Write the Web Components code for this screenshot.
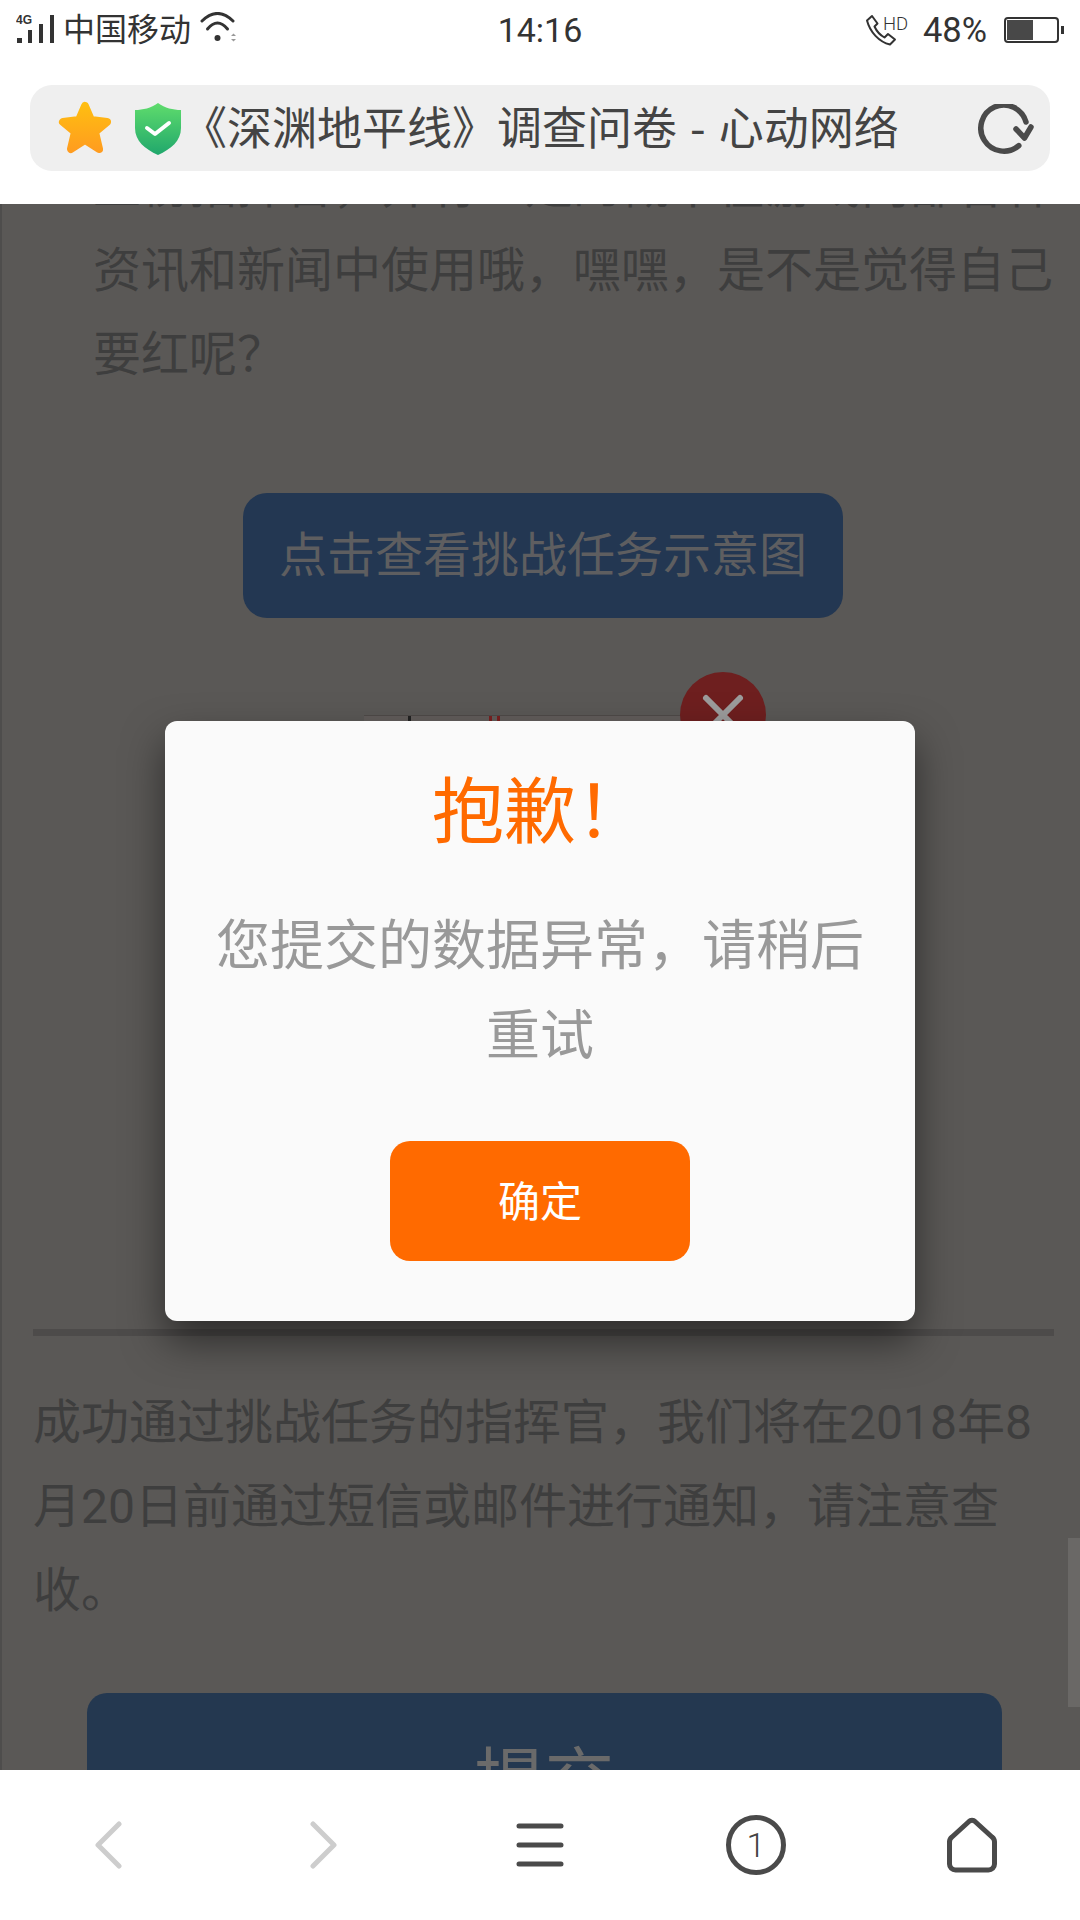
<!DOCTYPE html>
<html lang="zh-CN"><head><meta charset="utf-8"><title>《深渊地平线》调查问卷</title>
<style>
html,body{margin:0;padding:0;background:#fff}
body{width:1080px;height:1920px;overflow:hidden;font-family:"Noto Sans CJK SC",sans-serif}
</style></head><body>
<app-shell>
  <status-bar slot="top"></status-bar>
  <address-bar slot="top">《深渊地平线》调查问卷 - 心动网络</address-bar>
  <page-content slot="page">
    <dim-para indent style="margin-top:-59px">上榜指挥官，并有一定的概率在游戏内部各种<br>资讯和新闻中使用哦，嘿嘿，是不是觉得自己<br>要红呢？</dim-para>
    <dim-button>点击查看挑战任务示意图</dim-button>
    <sample-image></sample-image>
    <dim-divider></dim-divider>
    <dim-para>成功通过挑战任务的指挥官，我们将在2018年8<br>月20日前通过短信或邮件进行通知，请注意查<br>收。</dim-para>
    <submit-button>提交</submit-button>
  </page-content>
  <bottom-nav slot="bottom"></bottom-nav>
  <alert-dialog slot="over" heading="抱歉！" action="确定">您提交的数据异常，请稍后<br>重试</alert-dialog>
</app-shell>
<script>
const CJK='"Noto Sans CJK SC",sans-serif';
const NUM='Roboto,"Noto Sans CJK SC",sans-serif';
function def(name,html,init){
  customElements.define(name,class extends HTMLElement{
    constructor(){super();const r=this.attachShadow({mode:'open'});const t=document.createElement('template');t.innerHTML=html;r.appendChild(t.content.cloneNode(true));}
    connectedCallback(){if(init)init(this)}
  });
}
def('app-shell',`<style>
:host{display:flex;flex-direction:column;width:1080px;height:1920px;position:relative;overflow:hidden;background:#fff}
.top{flex:none;height:204px;background:#fff;position:relative;z-index:2}
.page{flex:1;min-height:0;overflow:hidden;position:relative}
.bottom{flex:none;height:150px;position:relative;z-index:2;background:#fff}
</style>
<div class="top"><slot name="top"></slot></div>
<div class="page"><slot name="page"></slot></div>
<div class="bottom"><slot name="bottom"></slot></div>
<slot name="over"></slot>`);

def('status-bar',`<style>
:host{display:grid;grid-template-columns:1fr auto 1fr;align-items:center;height:60px;margin-bottom:25px;color:#333}
.l{display:flex;align-items:center;padding-left:16px}
.c{font:400 34px/60px ${NUM};color:#333;position:relative;top:0}
.r{display:flex;align-items:center;justify-content:flex-end;padding-right:16px}
.car{font:400 32px/50px ${CJK};margin-left:7px;margin-right:9px;color:#333;height:50px;margin-bottom:6px}
.pct{font:400 34.500px/56px ${NUM};margin:0 17px 0 14px;color:#333}
svg{display:block;flex:none}
</style>
<div class="l">
 <svg width="40" height="32" viewBox="0 0 40 32"><text x="0" y="10" font-family="Liberation Sans" font-weight="700" font-size="12" fill="#333">4G</text><rect x="1" y="24" width="5" height="5" fill="#333"/><rect x="12" y="16" width="4" height="13" fill="#333"/><rect x="23" y="10" width="4" height="19" fill="#333"/><rect x="34" y="1" width="4" height="28" fill="#333"/></svg>
 <span class="car">中国移动</span>
 <svg width="38" height="36" viewBox="0 0 38 36" fill="none" stroke="#333" stroke-width="3" stroke-linecap="round"><path d="M2 9 Q17.500 -6 33 9"/><path d="M7.500 17 Q17.500 5 27.500 17"/><circle cx="17.500" cy="26" r="3" fill="#333" stroke="none"/><path d="M31 24l2.500-2.500 2.500 2.500z" fill="#999" stroke="none"/><path d="M31 27l2.500 2.500 2.500-2.500z" fill="#999" stroke="none"/></svg>
</div>
<div class="c">14:16</div>
<div class="r">
 <svg width="44" height="32" viewBox="0 0 44 32" fill="none"><path d="M2 6.500 L7 2 L12.500 9.500 L9.500 12.500 C11.500 17 15 21 19.500 23.500 L23 20 L30 25.500 L25 30.500 C14 28 5 18 2 6.500Z" stroke="#333" stroke-width="2" stroke-linejoin="round"/><text x="18" y="16" font-family="Roboto" font-weight="300" font-size="18.500" fill="#333">HD</text></svg>
 <span class="pct">48%</span>
 <svg width="60" height="26" viewBox="0 0 60 26"><rect x="1" y="1" width="53" height="24" rx="3" fill="none" stroke="#333" stroke-width="2"/><rect x="3" y="3" width="26" height="20" fill="#484848"/><rect x="57" y="9" width="3" height="8" fill="#333"/></svg>
</div>`);

def('address-bar',`<style>
:host{display:flex;align-items:center;margin:0 30px;height:86px;background:#efefef;border-radius:22px;position:relative;box-sizing:border-box;padding-left:28px}
.t{font:400 45px/82px ${CJK};color:#444;white-space:pre;margin-left:1px;word-spacing:3px;height:82px;margin-bottom:4px}
svg{display:block;flex:none}
.star{margin-right:23px}
.re{position:absolute;right:16px;top:19px}
</style>
<svg class="star" width="54" height="54" viewBox="0 0 54 54"><defs><linearGradient id="g1" gradientUnits="userSpaceOnUse" x1="0" y1="0" x2="0" y2="54"><stop offset="0" stop-color="#ffc010"/><stop offset="1" stop-color="#ff9a20"/></linearGradient></defs><polygon points="27,5 33,19 49,21 37,31 41,48 27,39 13,48 17,31 5,21 21,19" fill="url(#g1)" stroke="url(#g1)" stroke-width="8" stroke-linejoin="round"/></svg>
<svg width="46" height="53" viewBox="0 0 46 53"><defs><linearGradient id="g2" x1="0" y1="0" x2="0" y2="1"><stop offset="0" stop-color="#5fdc6c"/><stop offset="1" stop-color="#20a76c"/></linearGradient></defs><path d="M23 1 C30 6 38 8 46 8 V26 C46 39 36 47 23 53 C10 47 0 39 0 26 V8 C8 8 16 6 23 1Z" fill="url(#g2)"/><path d="M12 26 L20 32 L34 21" fill="none" stroke="#fff" stroke-width="4" stroke-linecap="round" stroke-linejoin="round"/></svg>
<span class="t"><slot></slot></span>
<svg class="re" width="56" height="50" viewBox="0 0 56 50" fill="none" stroke="#4a4a4a" stroke-width="5.500" stroke-linecap="round" stroke-linejoin="round"><path d="M40.800 41.600 A23 23 0 1 1 48 18"/><path d="M38 25 L46.500 34 L53 23"/></svg>`);

def('page-content',`<style>
:host{display:flex;flex-direction:column;height:1566px;background:#5a5856;border-left:2px solid #4e4d4c;box-sizing:border-box;overflow:hidden;position:relative}
.sb{position:absolute;right:0;top:1334px;width:12px;height:169px;background:#6a6866}
</style><slot></slot><div class="sb"></div>`);

def('dim-para',`<style>
:host{display:block;font:400 48px/84px ${NUM};color:#3e3e3e;padding-left:31px;white-space:nowrap;flex:none}
:host([indent]){padding-left:91px}
</style><slot></slot>`);

def('dim-button',`<style>
:host{display:flex;align-items:center;justify-content:center;flex:none;align-self:flex-start;box-sizing:border-box;margin:96px 0 0 241px;width:600px;height:125px;padding-bottom:10px;border-radius:24px;background:#233752;color:#5e5e60;font:400 48px/100px ${CJK}}
</style><slot></slot>`);

def('sample-image',`<style>
:host{display:block;flex:none;position:relative;margin:97px 0 0 362px;width:318px;height:500px;background:#625d5b;border-top:1px solid #4e4a48;box-sizing:border-box}
.x{position:absolute;left:316px;top:-44px;width:86px;height:86px}
svg{display:block}
</style>
<svg width="318" height="12" viewBox="0 0 318 12"><rect x="44" y="0" width="3" height="5" fill="#222"/><rect x="125" y="0" width="3" height="5" fill="#7a2020"/><rect x="133" y="0" width="3" height="5" fill="#7a2020"/></svg>
<svg class="x" viewBox="0 0 86 86"><circle cx="43" cy="43" r="43" fill="#6e1f1f"/><path d="M26 26 L60 60 M60 26 L26 60" stroke="#9c9c9c" stroke-width="6" stroke-linecap="round"/></svg>`);

def('dim-divider',`<style>
:host{display:block;flex:none;margin:114px 26px 45px 31px;height:7px;background:#4d4b4a}
</style>`);

def('submit-button',`<style>
:host{display:flex;justify-content:center;flex:none;align-self:flex-start;box-sizing:border-box;margin:60px 0 0 85px;width:915px;height:200px;border-radius:20px;background:#243850;color:#6a6a6a;font:400 70px/100px ${CJK};padding-top:33px}
</style><slot></slot>`);

def('bottom-nav',`<style>
:host{display:grid;grid-template-columns:repeat(5,1fr);height:150px;align-items:center;justify-items:center;background:#fff}
svg{display:block}
.tab{width:60px;height:60px;box-sizing:border-box;border:5px solid #4a4a4a;border-radius:50%;display:flex;align-items:center;justify-content:center;font:300 34px/1 Roboto,sans-serif;color:#444}
</style>
<svg width="28" height="48" viewBox="0 0 28 48" fill="none" stroke="#cdcdcd" stroke-width="5" stroke-linecap="round" stroke-linejoin="round"><path d="M25 3 L4 24 L25 45"/></svg>
<svg width="28" height="48" viewBox="0 0 28 48" fill="none" stroke="#cdcdcd" stroke-width="5" stroke-linecap="round" stroke-linejoin="round"><path d="M3 3 L24 24 L3 45"/></svg>
<svg width="48" height="44" viewBox="0 0 48 44" stroke="#4a4a4a" stroke-width="5" stroke-linecap="round"><path d="M3 3H45M3 22H45M3 41H45"/></svg>
<div class="tab">1</div>
<svg width="50" height="56" viewBox="0 0 50 56" fill="none" stroke="#4a4a4a" stroke-width="5" stroke-linejoin="round"><path d="M22 4.500 a4 4 0 0 1 6 0 L45 20 a6 6 0 0 1 2.500 5 V47 a6 6 0 0 1-6 6 H8.500 a6 6 0 0 1-6-6 V25 a6 6 0 0 1 2.500-5 Z"/></svg>`);

def('alert-dialog',`<style>
:host{display:block;position:absolute;left:165px;top:721px;width:750px;height:600px;box-sizing:border-box;background:#fafafa;border-radius:12px;box-shadow:0 20px 40px rgba(0,0,0,.5);padding-top:35px;text-align:center;z-index:1}
h2{margin:0;font:400 72px/100px ${CJK};color:#ff6a00}
p{margin:41px 0 0;font:400 54px/90px ${CJK};color:#999}
button{display:block;margin:64px auto 0;width:300px;height:120px;border:0;padding:0 0 4px;border-radius:20px;background:#ff6a00;color:#fff;font:400 42px/1 ${CJK}}
</style><h2></h2><p><slot></slot></p><button></button>`,el=>{
  el.shadowRoot.querySelector('h2').textContent=el.getAttribute('heading');
  el.shadowRoot.querySelector('button').textContent=el.getAttribute('action');
});
</script>
</body></html>
